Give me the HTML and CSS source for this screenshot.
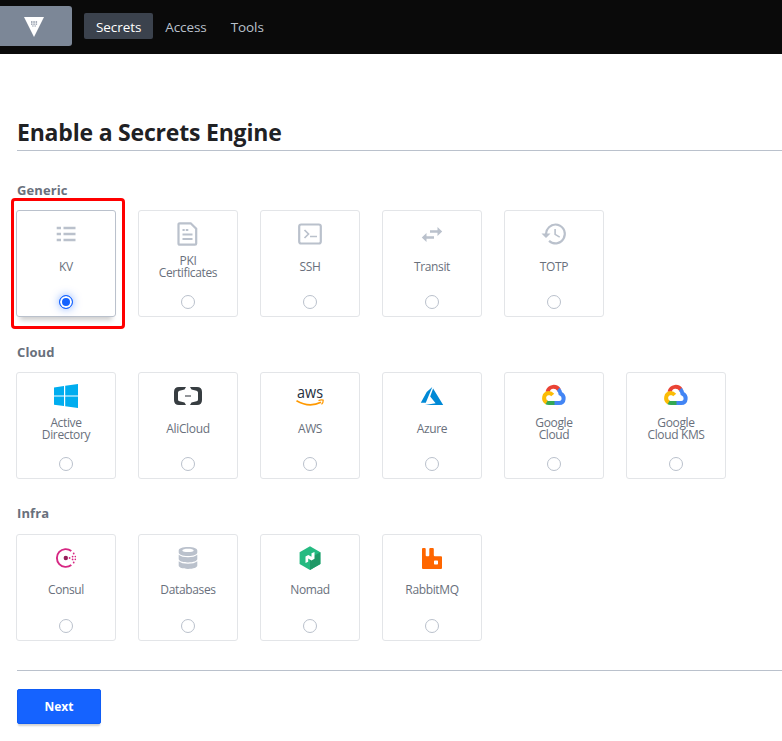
FILE: index.html
```html
<!DOCTYPE html>
<html lang="en">
<head>
<meta charset="utf-8">
<title>Enable a Secrets Engine</title>
<link rel="stylesheet" href="styles.css">
</head>
<body>
<header class="navbar">
  <a class="brand" aria-label="Vault">
    <svg width="20" height="20" viewBox="0 0 20 20"><path d="M0 0h20L10 20z" fill="#fff"/><path d="M7 4.300h1.500v1.400H7zM9.300 4.300h1.500v1.400H9.300zM11.600 4.300h1.500v1.400h-1.500zM7 6.500h1.500v1.200H7zM9.300 6.500h1.500v1.200H9.300zM11.600 6.500h1.500v1.200h-1.500zM8.200 8.400h1.400v1.200H8.200zM10.500 8.400h1.400v1.200h-1.400z" fill="#8993a3"/></svg>
  </a>
  <nav class="nav">
    <a class="nav-link active">Secrets</a>
    <a class="nav-link">Access</a>
    <a class="nav-link">Tools</a>
  </nav>
</header>
<main class="page">
  <h1 class="title">Enable a Secrets Engine</h1>

  <section class="group">
    <h2 class="group-title">Generic</h2>
    <div class="cards">
      <label class="card selected">
        <svg class="icon" viewBox="0 0 24 24" fill="#bac1cc"><path d="M2.700 4.800H7v2.400H2.700zM9.500 4.800h12v2.400h-12zM2.700 10.800H7v2.400H2.700zM9.500 10.800h12v2.400h-12zM2.700 16.800H7v2.400H2.700zM9.500 16.800h12v2.400h-12z"/></svg>
        <span class="name">KV</span><span class="radio"></span>
      </label>
      <label class="card">
        <svg class="icon" viewBox="0 0 24 24" fill="none" stroke="#bac1cc" stroke-width="2.200"><path d="M2.500 2.500q0-1.200 1.200-1.200h11l5.500 5.500v14.700q0 1.200-1.200 1.200H3.700q-1.200 0-1.200-1.200z"/><path d="M6.500 8h2.200M9.800 8h2.500M6.500 12.500h10M6.500 17h10" stroke-width="2"/></svg>
        <span class="name">PKI<br>Certificates</span><span class="radio"></span>
      </label>
      <label class="card">
        <svg class="icon" viewBox="0 0 24 24" fill="none" stroke="#bac1cc" stroke-width="2.200"><rect x="1.200" y="2.500" width="21.600" height="19" rx="2"/><path d="M6.500 8l4 4-4 4M12 14.500h7" stroke-width="1.700"/></svg>
        <span class="name">SSH</span><span class="radio"></span>
      </label>
      <label class="card">
        <svg class="icon" viewBox="0 0 24 24" fill="#bac1cc"><path d="M10 8.300h7.500V5L22.200 9.500 17.500 14v-3.300H10zM14 14.300H6.500V11L1.800 15.500 6.500 20v-3.300H14z"/></svg>
        <span class="name">Transit</span><span class="radio"></span>
      </label>
      <label class="card">
        <svg class="icon" viewBox="0 0 24 24" fill="#bac1cc"><path d="M13.500 1.500A10.500 10.500 0 0 0 3 11.500H-.5L4 16l4.500-4.500H5.200a8.300 8.300 0 1 1 2.600 6.500L6.300 19.700A10.500 10.500 0 1 0 13.500 1.500z"/><path d="M12.300 7v5.800l5 3 .8-1.300-4.200-2.500V7z"/></svg>
        <span class="name">TOTP</span><span class="radio"></span>
      </label>
      <span class="highlight"></span>
    </div>
  </section>

  <section class="group">
    <h2 class="group-title">Cloud</h2>
    <div class="cards">
      <label class="card">
        <svg class="icon" viewBox="0 0 24 24" fill="#00adef"><path d="M0 3.400L10 2v9.500H0zM11.200 1.800L24 0v11.500H11.200zM0 12.600h10v9.500L0 20.700zM11.200 12.600H24V24l-12.800-1.800z"/></svg>
        <span class="name">Active<br>Directory</span><span class="radio"></span>
      </label>
      <label class="card">
        <svg class="icon wide" viewBox="0 0 28 24" fill="#373d41"><path d="M12 3H5Q0 3 0 8v8q0 5 5 5h7l-1.500-2.600-5-1.200Q4 16.800 4 15.400V8.600Q4 7.200 5.500 6.800l5-1.200zM16 3h7q5 0 5 5v8q0 5-5 5h-7l1.500-2.600 5-1.200q1.500-.4 1.500-1.800V8.600q0-1.400-1.500-1.800l-5-1.200z"/><path d="M11 11.200h6v1.600h-6z" fill="#777b80"/></svg>
        <span class="name">AliCloud</span><span class="radio"></span>
      </label>
      <label class="card">
        <svg class="icon wide" viewBox="0 0 28 24"><text class="aws" x="14" y="14" text-anchor="middle" textLength="26" lengthAdjust="spacingAndGlyphs">aws</text><path d="M.5 16.800q12.500 7.200 24.500 1.500" fill="none" stroke="#f90" stroke-width="1.700"/><path d="M22.500 16.600q2.500-1 4.700-.4.200 2.200-1.700 4.200" fill="none" stroke="#f90" stroke-width="1.200"/></svg>
        <span class="name">AWS</span><span class="radio"></span>
      </label>
      <label class="card">
        <svg class="icon" viewBox="0 0 24 24" fill="#0089d6"><path d="M12.300 3L6.700 7.900.8 18.800h5zM13.100 4.400l-2.900 8 5.400 6.900L5 21h18.200z"/></svg>
        <span class="name">Azure</span><span class="radio"></span>
      </label>
      <label class="card">
        <svg class="icon" viewBox="0 0 24 24" fill="none" stroke-width="4"><path d="M5.500 8C7 1.500 14.500 1.500 17 6" stroke="#ea4335"/><path d="M16.200 5.400q2 1.600 2.300 4.300c4.500 2 4.200 9.400-1.200 9.400H12" stroke="#4285f4"/><path d="M12.500 19.100H7q-1.700 0-2.900-1" stroke="#34a853"/><path d="M4.600 18.500C.6 16 1.500 9.500 6.700 9q2.300 0 4 2" stroke="#fbbc05"/></svg>
        <span class="name">Google<br>Cloud</span><span class="radio"></span>
      </label>
      <label class="card">
        <svg class="icon" viewBox="0 0 24 24" fill="none" stroke-width="4"><path d="M5.500 8C7 1.500 14.500 1.500 17 6" stroke="#ea4335"/><path d="M16.200 5.400q2 1.600 2.300 4.300c4.500 2 4.200 9.400-1.200 9.400H12" stroke="#4285f4"/><path d="M12.500 19.100H7q-1.700 0-2.900-1" stroke="#34a853"/><path d="M4.600 18.500C.6 16 1.500 9.500 6.700 9q2.300 0 4 2" stroke="#fbbc05"/></svg>
        <span class="name">Google<br>Cloud KMS</span><span class="radio"></span>
      </label>
    </div>
  </section>

  <section class="group infra">
    <h2 class="group-title">Infra</h2>
    <div class="cards">
      <label class="card">
        <svg class="icon" viewBox="0 0 24 24" fill="#d62783"><path d="M17.300 5A8.900 8.900 0 1 0 17.300 19" fill="none" stroke="#d62783" stroke-width="1.900"/><circle cx="11.800" cy="12" r="2.200" fill="#961d59"/><circle cx="15.600" cy="12" r=".9"/><circle cx="18.600" cy="10.600" r=".9"/><circle cx="18.600" cy="13.400" r=".9"/><circle cx="21.300" cy="10.600" r=".8"/><circle cx="21.300" cy="13.400" r=".8"/><circle cx="19.700" cy="7.500" r=".9"/><circle cx="19.700" cy="16.500" r=".9"/></svg>
        <span class="name">Consul</span><span class="radio"></span>
      </label>
      <label class="card">
        <svg class="icon" viewBox="0 0 24 24" fill="#bac1cc"><path fill-rule="evenodd" d="M12 1C6.500 1 2.700 2.500 2.700 4.500v2C2.700 8.500 6.500 10 12 10s9.300-1.500 9.300-3.500v-2C21.300 2.500 17.500 1 12 1zm0 1.700c3 0 5.700.7 5.700 1.700S15 6 12 6 6.300 5.400 6.300 4.400 9 2.700 12 2.700z"/><path d="M2.700 8.700q3 2.500 9.300 2.500t9.300-2.500V13c0 2-3.800 3.400-9.300 3.400S2.700 15 2.700 13zM2.700 15.200q3 2.500 9.300 2.500t9.300-2.500v4.300c0 2-3.800 3.400-9.300 3.400s-9.300-1.400-9.300-3.400z"/></svg>
        <span class="name">Databases</span><span class="radio"></span>
      </label>
      <label class="card">
        <svg class="icon" viewBox="0 0 24 24"><path d="M12 .3l10.400 5.900v11.900L12 23.900 1.600 18.100V6.200z" fill="#25ba81"/><path d="M12 12l10.400-5.800v11.900L12 23.900z" fill="#1f9967"/><path d="M7.500 17v-6.500l2.800-1.600 3.200 1.900V7.300L16.500 6v6.700l-3 1.700-3.300-1.900v3.200z" fill="#fff"/></svg>
        <span class="name">Nomad</span><span class="radio"></span>
      </label>
      <label class="card">
        <svg class="icon" viewBox="0 0 24 24"><path fill="#f60" fill-rule="evenodd" d="M3 2h1.700q1 0 1 1v6.300q0 1 1 1h1.600q1 0 1-1V3q0-1 1-1h2.500q1 0 1 1v6.300q0 1 1 1h6.200q1 0 1 1V22q0 1-1 1H3q-1 0-1-1V3q0-1 1-1zm11.700 12.500q-.7 0-.7.700v2.600q0 .7.700.7h2.600q.7 0 .7-.7v-2.600q0-.7-.7-.7z"/></svg>
        <span class="name">RabbitMQ</span><span class="radio"></span>
      </label>
    </div>
  </section>

  <footer class="actions"><button class="next">Next</button></footer>
</main>
</body>
</html>
```
FILE: styles.css
```css
* { box-sizing: border-box; }
body {
  margin: 0;
  height: 741px;
  overflow: hidden;
  background: #fff;
  color: #69707c;
  font-family: "Open Sans", "Noto Sans", sans-serif;
}
.navbar {
  display: flex;
  height: 54px;
  padding-top: 6px;
  background: #0a0a0a;
}
.brand {
  display: flex;
  width: 72px;
  height: 40px;
  padding: 11px 0 0 24px;
  border-radius: 0 3px 3px 0;
  background: #7c8797;
}
.nav { display: flex; margin: 7px 0 0 12px; }
.nav-link {
  height: 26px;
  padding: 0 12px;
  border-radius: 2px;
  color: #bac1cc;
  font-size: 13.5px;
  font-weight: 500;
  line-height: 28px;
  letter-spacing: -0.08px;
}
.nav-link.active { background: #3b424d; color: #fff; }
.page { padding-left: 16px; }
.title {
  height: 51px;
  margin: 46px 0 0 1px;
  padding-top: 15px;
  border-bottom: 1px solid #bac1cc;
  color: #1f2124;
  font-size: 23px;
  font-weight: 700;
  line-height: 35px;
  letter-spacing: -0.2px;
}
.group { height: 162px; padding-top: 29px; }
.group-title {
  height: 30px;
  margin: 0 0 0 1px;
  font-size: 13px;
  font-weight: 700;
  line-height: 20px;
  letter-spacing: 0.1px;
}
.infra { padding-top: 28px; }
.infra .group-title { height: 31px; }
.cards { position: relative; display: flex; gap: 22px; }
.card {
  display: flex;
  flex-direction: column;
  align-items: center;
  width: 100px;
  height: 107px;
  padding-top: 11px;
  border: 1px solid #e3e5e8;
  border-radius: 3px;
}
.selected {
  border-color: #bac1cc;
  box-shadow: 0 7px 5px -4px rgba(0, 0, 0, .2);
}
.icon { width: 24px; height: 24px; flex: none; overflow: visible; }
.icon.wide { width: 28px; }
.aws { font: 500 15.5px "Open Sans", sans-serif; fill: #252f3e; }
.name {
  display: flex;
  align-items: center;
  height: 24px;
  margin-top: 9px;
  text-align: center;
  font-size: 12px;
  font-weight: 500;
  line-height: 12px;
  letter-spacing: -0.36px;
}
.infra .name { margin: 8px 0 1px; }
.radio {
  width: 14px;
  height: 14px;
  margin-top: 16px;
  border: 1px solid #bac1cc;
  border-radius: 50%;
}
.selected .radio {
  border-color: #1563ff;
  background: #1563ff;
  box-shadow: inset 0 0 0 2px #fff, 0 0 8px rgba(21, 99, 255, .5);
}
.highlight {
  position: absolute;
  top: -12px;
  left: -5px;
  width: 114px;
  height: 131px;
  border: 3px solid #f00;
  border-radius: 4px;
}
.actions {
  margin: 33px 0 0 1px;
  padding-top: 18px;
  border-top: 1px solid #bac1cc;
}
.next {
  width: 84px;
  height: 35px;
  padding: 0;
  border: 1px solid #0f5cf5;
  border-radius: 2px;
  background: #1563ff;
  box-shadow: 0 3px 2px -1px rgba(0, 0, 0, .18);
  color: #fff;
  font: 700 12px "Open Sans", sans-serif;
}
```
